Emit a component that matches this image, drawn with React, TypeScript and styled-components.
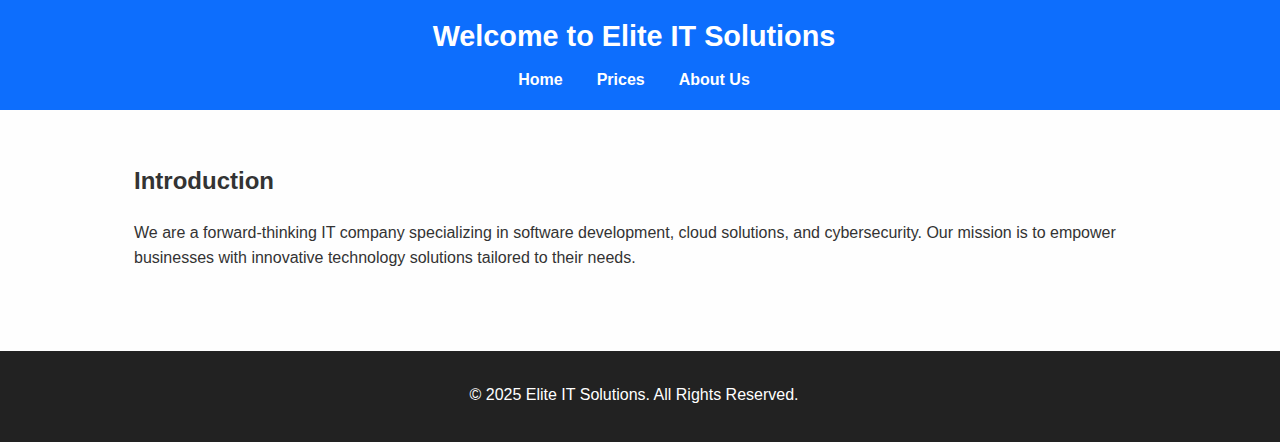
import React from "react";
import styled, { createGlobalStyle } from "styled-components";

const GlobalStyle = createGlobalStyle`
  html, body {
    margin: 0;
    padding: 0;
    background: #fefefe;
  }
  body {
    font-family: "Liberation Sans", Arial, sans-serif;
    color: #333;
    line-height: 1.6;
  }
`;

const Page = styled.div`
  display: flex;
  flex-direction: column;
  min-height: 442px;
`;

const Header = styled.header`
  background: #0d6efd;
  color: #fff;
  text-align: center;
  padding: 16px 12px 17px 0;
`;

const Title = styled.h1`
  margin: 0 0 11px;
  font-size: 28.8px;
  line-height: 40px;
  font-weight: bold;
`;

const Nav = styled.nav`
  display: flex;
  justify-content: center;
  gap: 34px;
  line-height: 26px;
`;

const NavLink = styled.a`
  color: #fff;
  font-weight: bold;
  font-size: 16px;
  text-decoration: none;
`;

const Main = styled.main`
  flex: 1;
  padding: 52px 12px 80px 0;
`;

const Section = styled.section`
  max-width: 1000px;
  margin: 0 auto;
`;

const Heading = styled.h2`
  margin: 0 0 20px;
  font-size: 24px;
  line-height: 38px;
  font-weight: bold;
  color: #333;
`;

const Paragraph = styled.p`
  margin: 0;
  font-size: 16px;
  line-height: 25px;
  color: #333;
`;

const Footer = styled.footer`
  background: #222;
  color: #fff;
  text-align: center;
  padding: 31px 12px 34px 0;
  font-size: 16px;
  line-height: 26px;
`;

export default function App() {
  return (
    <>
      <GlobalStyle />
      <Page>
        <Header>
          <Title>Welcome to Elite IT Solutions</Title>
          <Nav>
            <NavLink href="#">Home</NavLink>
            <NavLink href="#">Prices</NavLink>
            <NavLink href="#">About Us</NavLink>
          </Nav>
        </Header>
        <Main>
          <Section>
            <Heading>Introduction</Heading>
            <Paragraph>
              We are a forward-thinking IT company specializing in software development, cloud solutions, and
              cybersecurity. Our mission is to empower businesses with innovative technology solutions tailored to
              their needs.
            </Paragraph>
          </Section>
        </Main>
        <Footer>© 2025 Elite IT Solutions. All Rights Reserved.</Footer>
      </Page>
    </>
  );
}
